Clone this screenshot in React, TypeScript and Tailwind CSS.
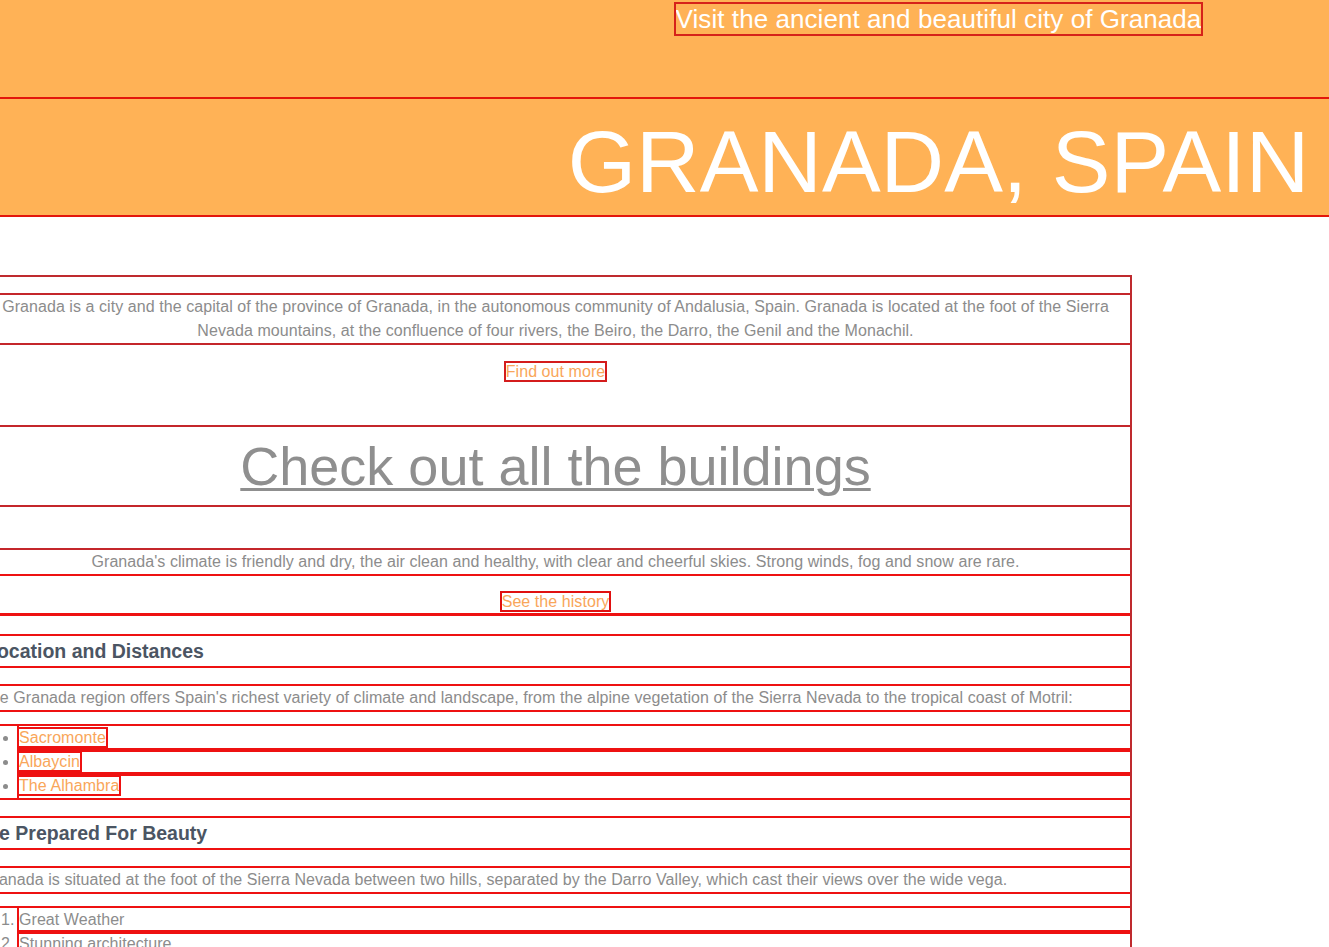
import React from "react";

const topLine = "outline-2 outline-[#c4262b]";
const lowLine = "outline-2 outline-[#ee1111]";

const places = ["Sacromonte", "Albaycin", "The Alhambra"];
const reasons = ["Great Weather", "Stunning architecture", "Delicious food"];

const App: React.FC = () => {
  return (
    <div className="min-h-screen bg-white font-['Liberation_Sans',Arial,sans-serif] text-[16px] tracking-[0.065px] text-[#8c8c8c]">
      <header className="bg-[#ffb256] pb-[1px] text-center text-white">
        <div className="h-[99px] pl-[548px] pt-[5px] text-[26px] leading-[29px]">
          <a href="#" className="outline-2 outline-[#d6221a]">
            Visit the ancient and beautiful city of Granada
          </a>
        </div>
        <h1 className="h-[116px] pl-[548px] pt-[9px] text-[88px] leading-[107px] tracking-normal outline-2 outline-[#e3160c]">
          GRANADA, SPAIN
        </h1>
      </header>

      <main className="-ml-[19px] mt-[61px] flex w-[1149px] flex-col outline-2 outline-[#bf2a2e]">
        <p className={`mt-[18px] text-center leading-6 ${topLine}`}>
          Granada is a city and the capital of the province of Granada, in the
          autonomous community of Andalusia, Spain. Granada is located at the
          foot of the Sierra Nevada mountains, at the confluence of four rivers,
          the Beiro, the Darro, the Genil and the Monachil.
        </p>
        <div className={`mt-[2px] h-[80px] pt-[15px] text-center leading-6 ${topLine}`}>
          <a href="#" className="text-[#f9a65a] outline-2 outline-[#d41c1c]">
            Find out more
          </a>
        </div>
        <div
          className={`mt-[2px] h-[78px] text-center text-[54px] leading-[78px] tracking-normal text-[#8f8f8f] underline decoration-[3px] underline-offset-[3px] ${topLine}`}
        >
          Check out all the buildings
        </div>
        <p className={`mt-[45px] text-center leading-6 ${topLine}`}>
          Granada's climate is friendly and dry, the air clean and healthy, with
          clear and cheerful skies. Strong winds, fog and snow are rare.
        </p>
        <div className={`mt-[2px] h-[37px] pt-[14px] text-center leading-6 ${lowLine}`}>
          <a href="#" className="text-[#f9a65a] outline-2 outline-[#e01010]">
            See the history
          </a>
        </div>

        <section className={`mt-[3px] flex flex-col pb-10 ${lowLine}`}>
          <h2 className={`mt-[20px] pl-[4px] text-[19.5px] font-bold leading-[30px] tracking-normal text-[#4b5563] ${lowLine}`}>
            Location and Distances
          </h2>
          <p className={`mt-[20px] leading-6 ${lowLine}`}>
            The Granada region offers Spain's richest variety of climate and
            landscape, from the alpine vegetation of the Sierra Nevada to the
            tropical coast of Motril:
          </p>
          <ul className={`mt-[16px] list-disc pl-[38px] ${lowLine}`}>
            {places.map((place) => (
              <li key={place} className={`leading-6 ${lowLine}`}>
                <a href="#" className="text-[#f9a65a] outline-2 outline-[#ee1111]">
                  {place}
                </a>
              </li>
            ))}
          </ul>

          <h2 className={`mt-[20px] pl-[4px] text-[19.5px] font-bold leading-[30px] tracking-normal text-[#4b5563] ${lowLine}`}>
            Be Prepared For Beauty
          </h2>
          <p className={`mt-[20px] leading-6 ${lowLine}`}>
            Granada is situated at the foot of the Sierra Nevada between two
            hills, separated by the Darro Valley, which cast their views over the
            wide vega.
          </p>
          <ol className={`mt-[16px] list-decimal pl-[38px] ${lowLine}`}>
            {reasons.map((reason) => (
              <li key={reason} className={`leading-6 ${lowLine}`}>
                {reason}
              </li>
            ))}
          </ol>
        </section>
      </main>
    </div>
  );
};

export default App;
